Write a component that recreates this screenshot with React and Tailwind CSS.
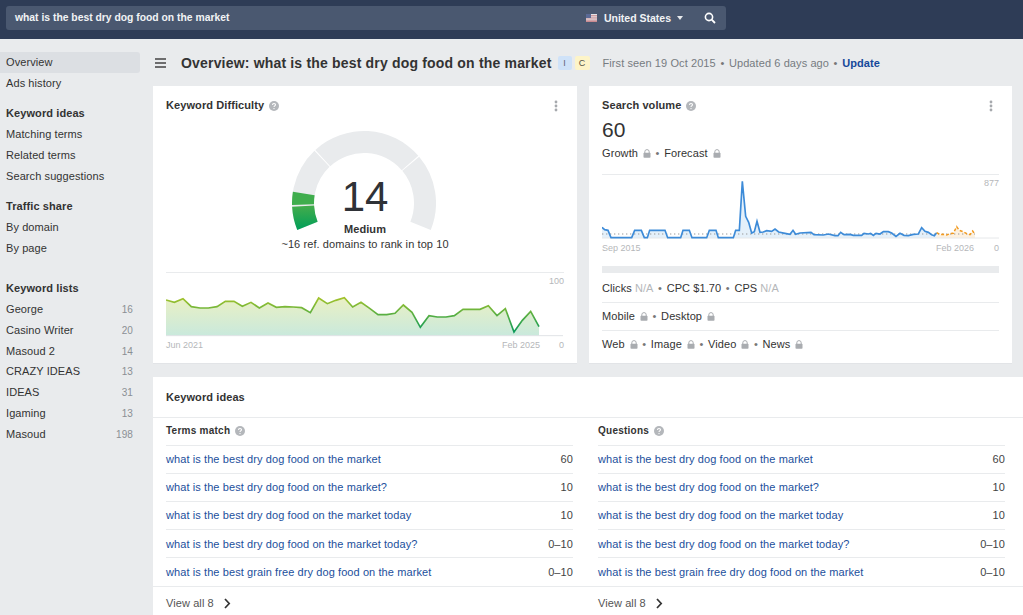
const kd = [[33,540],[58,547],[84,536],[109,560],[135,564],[160,564],[186,560],[211,544],[237,544],[262,559],[288,547],[313,564],[339,549],[364,562],[390,560],[415,561],[440,563],[466,578],[491,534],[517,551],[542,541],[568,533],[593,561],[618,547],[644,565],[669,584],[695,584],[720,580],[745,555],[771,577],[796,622],[822,587],[847,591],[873,591],[898,587],[924,568],[950,568],[975,568],[1000,557],[1026,587],[1051,566],[1077,636],[1102,601],[1127,574],[1152,620]];
const vol = [[36,263],[44,270],[54,272],[63,294],[125,294],[134,272],[154,272],[163,294],[172,294],[179,272],[225,272],[233,294],[272,294],[279,272],[298,272],[306,294],[350,294],[358,272],[378,272],[385,294],[430,294],[437,272],[448,272],[457,125],[467,230],[476,248],[485,280],[493,276],[501,245],[510,278],[520,277],[530,273],[545,275],[555,268],[566,277],[585,281],[600,284],[609,272],[617,284],[630,280],[663,278],[672,285],[700,286],[715,283],[735,288],[744,288],[752,278],[762,285],[780,284],[790,287],[815,287],[822,281],[835,283],[842,281],[850,287],[858,281],[870,283],[880,276],[895,276],[905,280],[918,290],[930,281],[942,287],[955,288],[970,284],[985,283],[995,264],[1005,275],[1015,278],[1025,285],[1033,288],[1040,279]];
const fc = [[1040,279],[1050,285],[1060,284],[1070,286],[1080,282],[1090,281],[1100,261],[1108,272],[1120,276],[1130,282],[1140,285],[1148,274],[1155,284]];
const pts = (a) => a.map((p) => p.join(",")).join(" ");

function seg(a0, a1, ro = 72, ri = 50) {
  const cx = 72, cy = 72;
  const p = (r, a) => {
    const t = (a * Math.PI) / 180;
    return `${(cx + r * Math.cos(t)).toFixed(2)} ${(cy - r * Math.sin(t)).toFixed(2)}`;
  };
  return `M${p(ro, a0)} A${ro} ${ro} 0 0 1 ${p(ro, a1)} L${p(ri, a1)} A${ri} ${ri} 0 0 0 ${p(ri, a0)} Z`;
}

function Help() {
  return (
    <svg width="10" height="10" viewBox="0 0 10 10" className="shrink-0">
      <circle cx="5" cy="5" r="5" fill="#b4b7bb" />
      <path d="M3.5 3.9c0-.9.7-1.4 1.5-1.4s1.5.5 1.5 1.3c0 1.1-1.5 1.1-1.5 2.2" fill="none" stroke="#fff" strokeWidth="1.1" />
      <circle cx="5" cy="7.6" r=".7" fill="#fff" />
    </svg>
  );
}
function Lock() {
  return (
    <svg width="8" height="9" viewBox="0 0 8 9" className="shrink-0">
      <path d="M1.8 4V2.8a2.2 2.2 0 0 1 4.4 0V4" fill="none" stroke="#a9acb0" strokeWidth="1" />
      <rect x="0.5" y="3.8" width="7" height="5" rx="0.8" fill="#a9acb0" />
    </svg>
  );
}
function Dots() {
  return (
    <svg width="4" height="12" viewBox="0 0 4 12" className="shrink-0">
      <circle cx="2" cy="2" r="1.4" fill="#a6a9ad" />
      <circle cx="2" cy="6" r="1.4" fill="#a6a9ad" />
      <circle cx="2" cy="10" r="1.4" fill="#a6a9ad" />
    </svg>
  );
}
const Sep = () => <span className="mx-[4.6px] text-[#777]">•</span>;

function SideItem({ children, active, n, cls = "" }) {
  return (
    <div className={`h-[21px] mr-[13px] pl-[6px] pr-[7px] flex items-center justify-between rounded-r-[3px] text-[#333] ${active ? "bg-[#dcdfe3]" : ""} ${cls}`}>
      <span>{children}</span>
      {n && <span className="text-[#8b8f94] text-[10px]">{n}</span>}
    </div>
  );
}
const SideHead = ({ children, cls }) => (
  <div className={`h-[21px] pl-[6px] flex items-center font-bold text-[#333] ${cls}`}>{children}</div>
);

const K = "what is the best dry dog food on the market";
const rows = [
  [K, "60"],
  [K + "?", "10"],
  [K + " today", "10"],
  [K + " today?", "0–10"],
  ["what is the best grain free dry dog food on the market", "0–10"],
];

function Column({ title, cls }) {
  return (
    <div className={cls}>
      <div className="h-[28px] pb-[2px] border-b border-[#e9ebed] flex items-center gap-[5px] font-bold text-[10px] text-[#333] tracking-[0.25px]">
        <span>{title}</span>
        <Help />
      </div>
      {rows.map((r, i) => (
        <div key={i} className={`h-[28px] flex items-center justify-between ${i < 4 ? "border-b border-[#e9ebed]" : ""} ${i === 3 ? "pt-[1px]" : ""}`}>
          <span className="text-[#1c4f9c]">{r[0]}</span>
          <span className="text-[#444]">{r[1]}</span>
        </div>
      ))}
    </div>
  );
}

function ViewAll() {
  return (
    <div className="flex items-center h-[33px] text-[#555]">
      <span>View all 8</span>
      <svg width="8" height="11" viewBox="0 0 8 11" className="ml-[9px]">
        <path d="M2 1l4.2 4.5L2 10" fill="none" stroke="#333" strokeWidth="1.7" />
      </svg>
    </div>
  );
}

export default function App() {
  return (
    <div className="w-[1023px] h-[615px] overflow-hidden bg-[#e9ebed] text-[11px] leading-none tracking-[0.09px] font-['Liberation_Sans',Arial,sans-serif] flex flex-col">
      <header className="h-[39px] shrink-0 bg-[#2e3c56] pt-[6px] pl-[6px]">
        <div className="w-[720px] h-[24px] rounded-[3px] bg-[#4a5870] flex items-center pl-[9px] text-white tracking-normal">
          <span className="font-bold text-[#f1f3f5] text-[10.35px]">{K}</span>
          <span className="ml-auto flex items-center">
            <svg width="11" height="8" viewBox="0 0 11 8" className="mr-[7px]">
              <rect width="11" height="8" fill="#e3e3e6" />
              <rect y="1.2" width="11" height="1.1" fill="#c98a90" />
              <rect y="3.4" width="11" height="1.1" fill="#c98a90" />
              <rect y="5.6" width="11" height="1.1" fill="#c98a90" />
              <rect y="7" width="11" height="1" fill="#c98a90" />
              <rect width="5" height="4" fill="#5b6a96" />
            </svg>
            <span className="font-bold text-[#f1f3f5] text-[10.5px]">United States</span>
            <svg width="6" height="4" viewBox="0 0 6 4" className="ml-[6px]"><path d="M0 0h6L3 4z" fill="#e8eaed" /></svg>
          </span>
          <svg width="12" height="12" viewBox="0 0 12 12" className="ml-[21px] mr-[10px]">
            <circle cx="5" cy="5" r="3.6" fill="none" stroke="#fff" strokeWidth="1.6" />
            <path d="M7.7 7.7L11 11" stroke="#fff" strokeWidth="1.8" />
          </svg>
        </div>
      </header>

      <div className="flex flex-1 min-h-0">
        <aside className="w-[153px] shrink-0 pt-[13px]">
          <SideItem active>Overview</SideItem>
          <SideItem>Ads history</SideItem>
          <SideHead cls="mt-[9px]">Keyword ideas</SideHead>
          <SideItem>Matching terms</SideItem>
          <SideItem>Related terms</SideItem>
          <SideItem>Search suggestions</SideItem>
          <SideHead cls="mt-[9px]">Traffic share</SideHead>
          <SideItem>By domain</SideItem>
          <SideItem>By page</SideItem>
          <SideHead cls="mt-[19px]">Keyword lists</SideHead>
          <SideItem n="16">George</SideItem>
          <SideItem n="20">Casino Writer</SideItem>
          <SideItem n="14">Masoud 2</SideItem>
          <SideItem n="13" cls="-mt-[1px]">CRAZY IDEAS</SideItem>
          <SideItem n="31">IDEAS</SideItem>
          <SideItem n="13">Igaming</SideItem>
          <SideItem n="198">Masoud</SideItem>
        </aside>

        <main className="flex-1 min-w-0">
          <div className="h-[47px] flex items-center pl-[2px] pt-[1px]">
            <svg width="11" height="10" viewBox="0 0 11 10" className="-mt-[1px]">
              <path d="M0 1h11M0 5h11M0 9h11" stroke="#444" strokeWidth="1.4" />
            </svg>
            <h1 className="ml-[15px] text-[14px] font-bold text-[#333] tracking-[0.18px]">Overview: {K}</h1>
            <span className="ml-[6px] w-[14px] h-[14px] rounded-[2px] bg-[#cfe2f8] text-[#667] text-[9px] flex items-center justify-center">I</span>
            <span className="ml-[3px] w-[15px] h-[14px] rounded-[2px] bg-[#fdf4c8] text-[#554] text-[9px] flex items-center justify-center">C</span>
            <span className="ml-[13px] text-[#767b81]">First seen 19 Oct 2015</span>
            <Sep />
            <span className="text-[#767b81]">Updated 6 days ago</span>
            <Sep />
            <span className="font-bold text-[#15489a]">Update</span>
          </div>

          <div className="flex gap-[12px] pr-[11px]">
            <section className="relative w-[424px] h-[278px] bg-white border-b border-[#e2e4e7] px-[13px]">
              <div className="h-[39px] flex items-center gap-[5px] font-bold text-[#333]">
                <span>Keyword Difficulty</span>
                <Help />
                <span className="ml-auto mr-[6px]"><Dots /></span>
              </div>
              <div className="relative h-[147px]">
                <svg width="144" height="110" viewBox="0 0 144 110" className="absolute left-[126px] top-[6px]">
                  <path d={seg(202, 133.5)} fill="#e9ebed" />
                  <path d={seg(132.5, 41)} fill="#e9ebed" />
                  <path d={seg(40, -22)} fill="#e9ebed" />
                  <defs>
                    <linearGradient id="g1" x1="0" y1="0" x2="0" y2="1">
                      <stop offset="0" stopColor="#44ac4c" />
                      <stop offset="1" stopColor="#009f59" />
                    </linearGradient>
                  </defs>
                  <path d={seg(181.5, 171)} fill="#3fad4d" />
                  <path d={seg(202, 183)} fill="url(#g1)" />
                </svg>
                <div className="absolute left-0 right-0 top-[48px] flex flex-col items-center text-[#333]">
                  <div className="text-[42px] leading-[48px] tracking-normal text-[#2f3237]">14</div>
                  <div className="font-bold mt-[2px] leading-[13px]">Medium</div>
                  <div className="mt-[2px] leading-[13px] text-[#333]">~16 ref. domains to rank in top 10</div>
                </div>
              </div>
              <div className="relative border-t border-[#e9ebed]">
                <svg width="397" height="64" viewBox="33 459 1191 192" className="block">
                  <defs>
                    <linearGradient id="a1" x1="0" y1="0" x2="0" y2="1">
                      <stop offset="0" stopColor="#eaf0c4" />
                      <stop offset="1" stopColor="#c9e9dc" />
                    </linearGradient>
                    <linearGradient id="l1" gradientUnits="userSpaceOnUse" x1="0" y1="530" x2="0" y2="640">
                      <stop offset="0" stopColor="#a8c42a" />
                      <stop offset="1" stopColor="#06995c" />
                    </linearGradient>
                  </defs>
                  <polygon points={`33,647 ${pts(kd)} 1152,647`} fill="url(#a1)" />
                  <path d="M33 647H1224" stroke="#e0e3e6" strokeWidth="3" />
                  <polyline points={pts(kd)} fill="none" stroke="url(#l1)" strokeWidth="5" />
                </svg>
                <span className="absolute right-0 top-[4px] text-[9px] tracking-normal text-[#b5b7ba]">100</span>
                <div className="flex h-[17px] items-center text-[9px] tracking-normal text-[#b5b7ba]">
                  <span>Jun 2021</span>
                  <span className="ml-auto mr-[19px]">Feb 2025</span>
                  <span>0</span>
                </div>
              </div>
            </section>

            <section className="relative w-[423px] h-[278px] bg-white border-b border-[#e2e4e7] px-[13px]">
              <div className="h-[39px] flex items-center gap-[5px] font-bold text-[#333]">
                <span>Search volume</span>
                <Help />
                <span className="ml-auto mr-[6px]"><Dots /></span>
              </div>
              <div className="-mt-[7px] text-[21px] leading-[24px] tracking-normal text-[#333]">60</div>
              <div className="h-[20px] mt-[1px] flex items-center text-[#333]">
                <span>Growth</span><span className="ml-[5px]"><Lock /></span>
                <Sep />
                <span>Forecast</span><span className="ml-[5px]"><Lock /></span>
              </div>
              <div className="relative mt-[11px] border-t border-[#e9ebed]">
                <svg width="397" height="64" viewBox="36 106 1191 192" className="block">
                  <polygon points={`36,295 ${pts(vol)} 1040,295`} fill="#e4f0fa" />
                  <polygon points={`1040,295 ${pts(fc)} 1155,295`} fill="#fdf1e0" />
                  <path d="M36 283H1155" stroke="#999" strokeWidth="3" strokeDasharray="4 8" />
                  <path d="M36 295H1227" stroke="#e6e8ea" strokeWidth="3" />
                  <polyline points={pts(vol)} fill="none" stroke="#3d8bd8" strokeWidth="5" />
                  <polyline points={pts(fc)} fill="none" stroke="#f29a1f" strokeWidth="4.5" strokeDasharray="9 6" />
                </svg>
                <span className="absolute right-0 top-[4px] text-[9px] tracking-normal text-[#b5b7ba]">877</span>
                <div className="flex h-[18px] items-center text-[9px] tracking-normal text-[#b5b7ba]">
                  <span>Sep 2015</span>
                  <span className="ml-auto mr-[20px]">Feb 2026</span>
                  <span>0</span>
                </div>
              </div>
              <div className="h-[7px] mt-[9px] bg-[#e9ebed]" />
              <div className="h-[30px] pt-[1px] flex items-center border-b border-[#e9ebed] text-[#333]">
                <span>Clicks</span><span className="ml-[3px] text-[#b5b7ba]">N/A</span>
                <Sep /><span>CPC $1.70</span>
                <Sep /><span>CPS</span><span className="ml-[3px] text-[#b5b7ba]">N/A</span>
              </div>
              <div className="h-[28px] flex items-center border-b border-[#e9ebed] text-[#333]">
                <span>Mobile</span><span className="ml-[5px]"><Lock /></span>
                <Sep /><span>Desktop</span><span className="ml-[5px]"><Lock /></span>
              </div>
              <div className="h-[27px] flex items-center text-[#333]">
                <span>Web</span><span className="ml-[5px]"><Lock /></span>
                <Sep /><span>Image</span><span className="ml-[5px]"><Lock /></span>
                <Sep /><span>Video</span><span className="ml-[5px]"><Lock /></span>
                <Sep /><span>News</span><span className="ml-[5px]"><Lock /></span>
              </div>
            </section>
          </div>

          <section className="mt-[13px] bg-white h-[238px]">
            <div className="h-[41px] border-b border-[#e9ebed] pl-[13px] flex items-center font-bold text-[#333]">Keyword ideas</div>
            <div className="grid grid-cols-[433px_1fr] border-b border-[#e9ebed]">
              <Column title="Terms match" cls="pl-[13px] pr-[13px]" />
              <Column title="Questions" cls="pl-[12px] pr-[18px]" />
            </div>
            <div className="grid grid-cols-[433px_1fr]">
              <div className="pl-[13px]"><ViewAll /></div>
              <div className="pl-[12px]"><ViewAll /></div>
            </div>
          </section>
        </main>
      </div>
    </div>
  );
}
